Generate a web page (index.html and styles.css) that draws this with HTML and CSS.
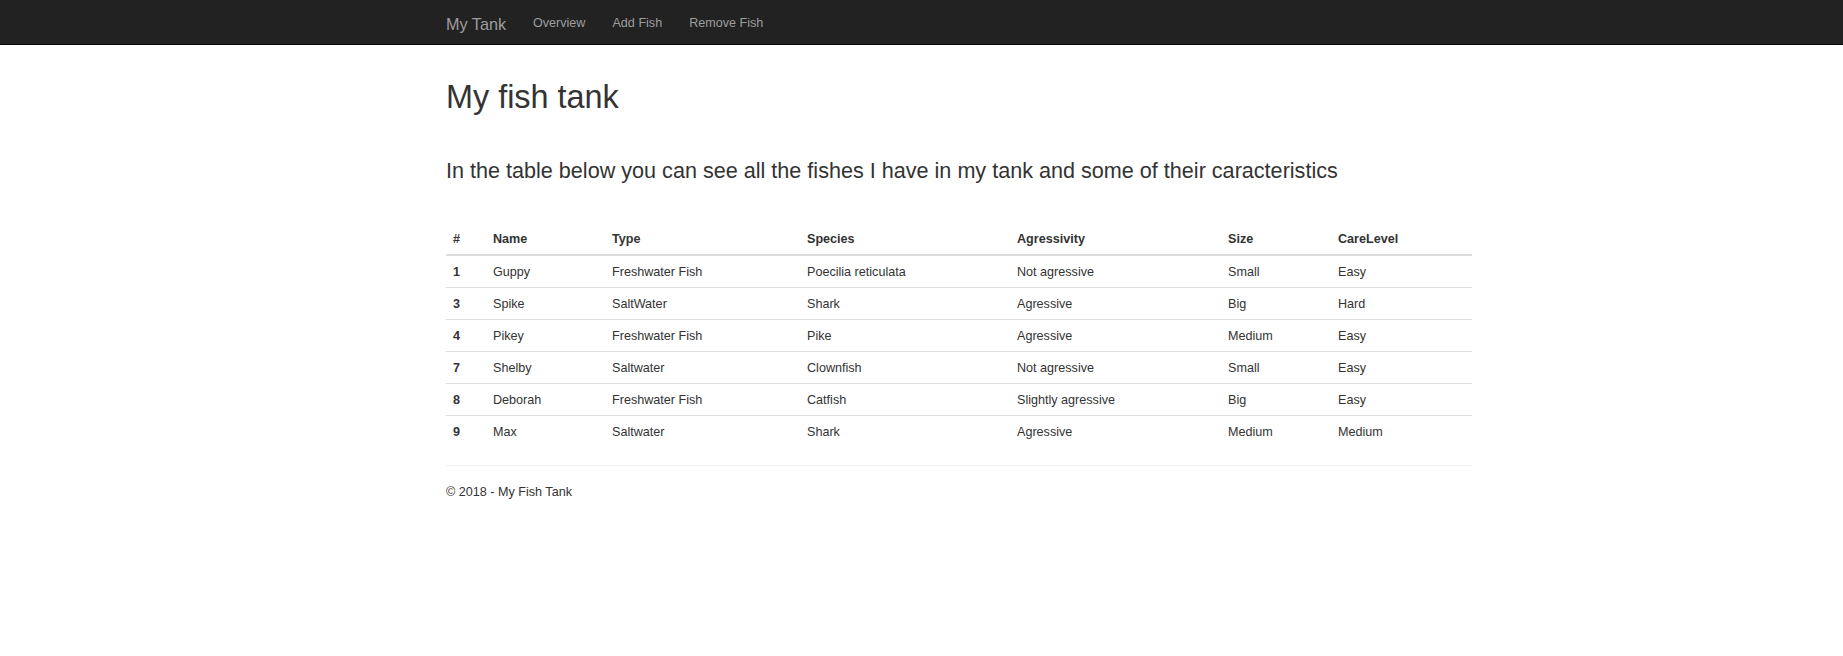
FILE: index.html
```html
<!DOCTYPE html>
<html lang="en">
<head>
<meta charset="utf-8">
<title>My Tank</title>
<link rel="stylesheet" href="styles.css">
</head>
<body>
<header class="navbar">
  <div class="nav-inner">
    <a class="brand" href="#">My Tank</a>
    <ul class="nav">
      <li><a href="#">Overview</a></li>
      <li><a href="#">Add Fish</a></li>
      <li><a href="#">Remove Fish</a></li>
    </ul>
  </div>
</header>
<main class="container">
  <h1 class="title">My fish tank</h1>
  <h3 class="subtitle">In the table below you can see all the fishes I have in my tank and some of their caracteristics</h3>
  <table class="table">
    <colgroup>
      <col class="c-id"><col class="c-name"><col class="c-type"><col class="c-species"><col class="c-agr"><col class="c-size"><col class="c-care">
    </colgroup>
    <thead>
      <tr><th>#</th><th>Name</th><th>Type</th><th>Species</th><th>Agressivity</th><th>Size</th><th>CareLevel</th></tr>
    </thead>
    <tbody>
      <tr><th>1</th><td>Guppy</td><td>Freshwater Fish</td><td>Poecilia reticulata</td><td>Not agressive</td><td>Small</td><td>Easy</td></tr>
      <tr><th>3</th><td>Spike</td><td>SaltWater</td><td>Shark</td><td>Agressive</td><td>Big</td><td>Hard</td></tr>
      <tr><th>4</th><td>Pikey</td><td>Freshwater Fish</td><td>Pike</td><td>Agressive</td><td>Medium</td><td>Easy</td></tr>
      <tr><th>7</th><td>Shelby</td><td>Saltwater</td><td>Clownfish</td><td>Not agressive</td><td>Small</td><td>Easy</td></tr>
      <tr><th>8</th><td>Deborah</td><td>Freshwater Fish</td><td>Catfish</td><td>Slightly agressive</td><td>Big</td><td>Easy</td></tr>
      <tr><th>9</th><td>Max</td><td>Saltwater</td><td>Shark</td><td>Agressive</td><td>Medium</td><td>Medium</td></tr>
    </tbody>
  </table>
  <hr class="rule">
  <footer class="footer">
    <p>&copy; 2018 - My Fish Tank</p>
  </footer>
</main>
</body>
</html>
```

FILE: styles.css
```css
* { box-sizing: border-box; }

html, body {
  margin: 0;
  padding: 0;
  background: #fff;
}

body {
  font-family: "Liberation Sans", Arial, Helvetica, sans-serif;
  font-size: 12.6px;
  line-height: 18px;
  color: #333;
}

a { text-decoration: none; }

.navbar {
  height: 45px;
  background: #222;
  border-bottom: 1px solid #080808;
}

.nav-inner {
  display: flex;
  align-items: flex-start;
  margin-left: 446px;
  width: 1026px;
  height: 44px;
}

.brand {
  display: block;
  font-size: 16.2px;
  line-height: 18px;
  color: #9d9d9d;
  padding: 15px 13.5px 0 0;
}

.nav {
  display: flex;
  list-style: none;
  margin: 0;
  padding: 0;
}

.nav a {
  display: block;
  font-size: 12.6px;
  line-height: 18px;
  color: #9d9d9d;
  padding: 14px 13.5px 0;
}

.container {
  margin-left: 446px;
  width: 1026px;
  padding-top: 35px;
}

.title {
  margin: 0;
  font-size: 32.4px;
  line-height: 1.1;
  font-weight: 500;
  color: #333;
}

.subtitle {
  margin: 43px 0 0;
  font-size: 21.6px;
  line-height: 1.1;
  font-weight: 500;
  color: #333;
}

.table {
  margin-top: 41px;
  margin-bottom: 18px;
  width: 1026px;
  table-layout: fixed;
  border-collapse: collapse;
  border-spacing: 0;
}

.c-id { width: 40px; }
.c-name { width: 119px; }
.c-type { width: 195px; }
.c-species { width: 210px; }
.c-agr { width: 211px; }
.c-size { width: 110px; }
.c-care { width: 141px; }

.table th,
.table td {
  padding: 6.5px 7px;
  text-align: left;
  vertical-align: top;
  white-space: nowrap;
}

.table th { font-weight: bold; }

.table thead th {
  border-bottom: 2px solid #ddd;
}

.table tbody tr + tr th,
.table tbody tr + tr td {
  border-top: 1px solid #ddd;
}

.rule {
  margin: 0 0 17px;
  border: 0;
  border-top: 1px solid #eee;
  height: 0;
}

.footer p {
  margin: 0;
}
```
